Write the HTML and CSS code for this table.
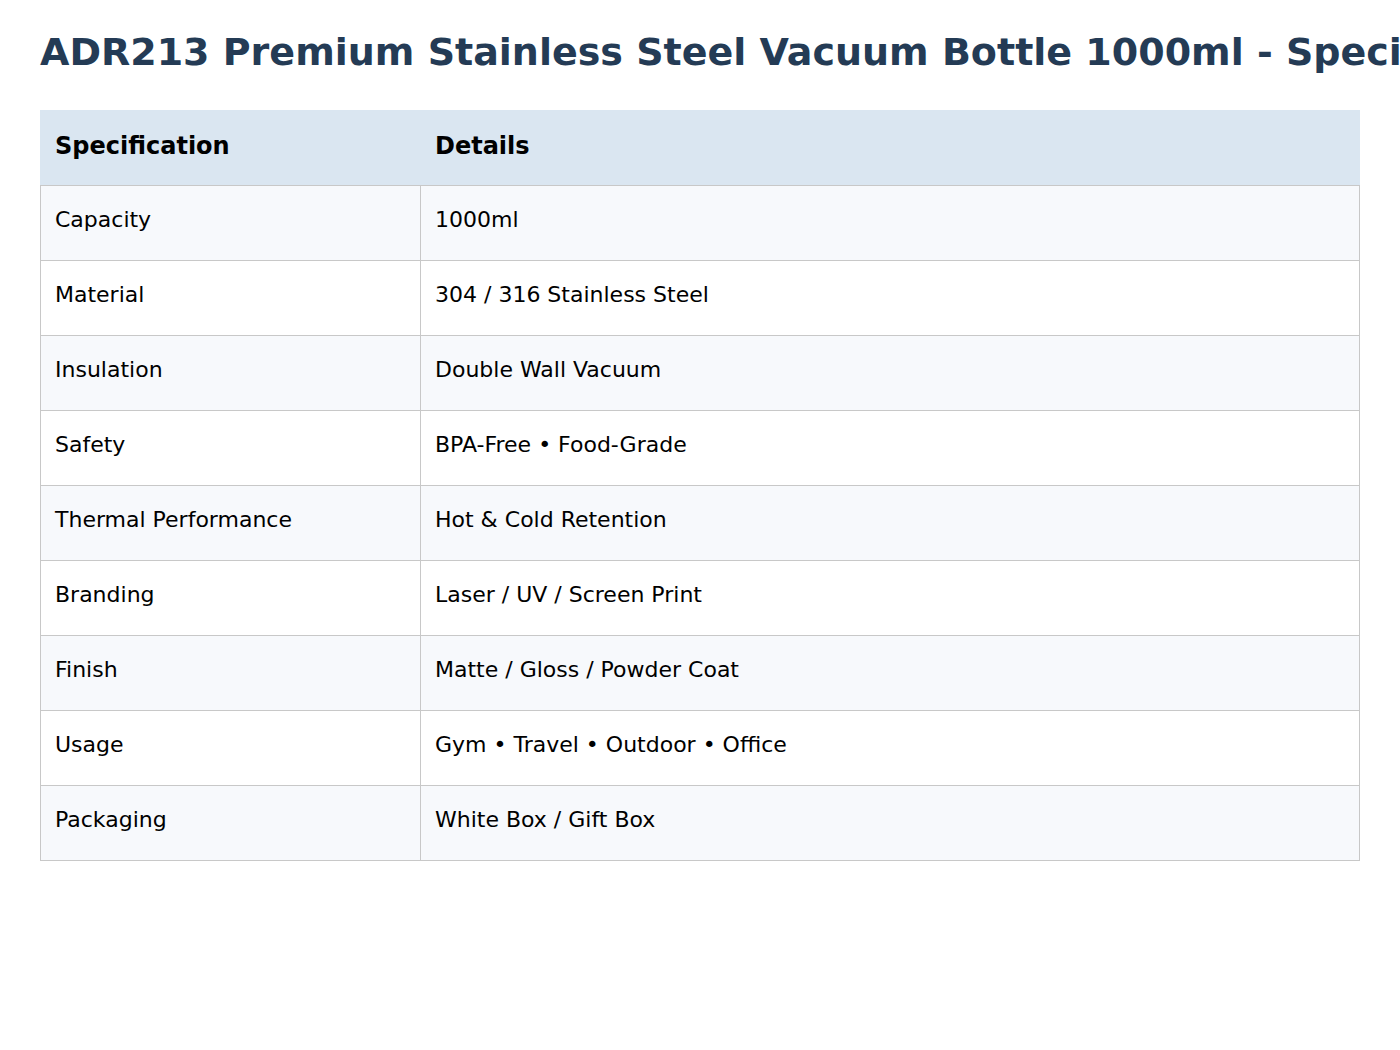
FILE: index.html
```html
<!DOCTYPE html>
<html>
<head>
<meta charset="utf-8">
<link rel="stylesheet" href="styles.css">
</head>
<body>
<h1 class="title">ADR213 Premium Stainless Steel Vacuum Bottle 1000ml - Specifications</h1>
<table class="spec">
  <thead>
    <tr><th class="c1">Specification</th><th>Details</th></tr>
  </thead>
  <tbody>
    <tr><td>Capacity</td><td>1000ml</td></tr>
    <tr><td>Material</td><td>304 / 316 Stainless Steel</td></tr>
    <tr><td>Insulation</td><td>Double Wall Vacuum</td></tr>
    <tr><td>Safety</td><td>BPA-Free • Food-Grade</td></tr>
    <tr><td>Thermal Performance</td><td>Hot &amp; Cold Retention</td></tr>
    <tr><td>Branding</td><td>Laser / UV / Screen Print</td></tr>
    <tr><td>Finish</td><td>Matte / Gloss / Powder Coat</td></tr>
    <tr><td>Usage</td><td>Gym • Travel • Outdoor • Office</td></tr>
    <tr><td>Packaging</td><td>White Box / Gift Box</td></tr>
  </tbody>
</table>
</body>
</html>
```

FILE: styles.css
```css
html, body {
  margin: 0;
  padding: 0;
  background: #ffffff;
  overflow: hidden;
}
body {
  padding: 30px 40px 40px 40px;
  font-family: "DejaVu Sans", sans-serif;
}
.title {
  margin: 0 0 36px 0;
  font-size: 38px;
  line-height: 44px;
  font-weight: bold;
  color: #243b55;
  white-space: nowrap;
}
.spec {
  width: 1320px;
  border-collapse: collapse;
  font-size: 22px;
  color: #000;
}
.spec th, .spec td {
  height: 75px;
  box-sizing: border-box;
  padding: 0 14px;
  text-align: left;
  vertical-align: middle;
}
.spec th {
  background: #dae6f1;
  font-size: 24px;
  font-weight: bold;
  border: 1px solid #dae6f1;
  border-bottom-color: #c8c8c8;
  padding-bottom: 5px;
}
.spec .c1 {
  width: 380px;
}
.spec td {
  border: 1px solid #c8c8c8;
  padding-bottom: 8px;
}
.spec tbody tr:nth-child(odd) td {
  background: #f7f9fc;
}
.spec tbody tr:nth-child(even) td {
  background: #ffffff;
}
```
